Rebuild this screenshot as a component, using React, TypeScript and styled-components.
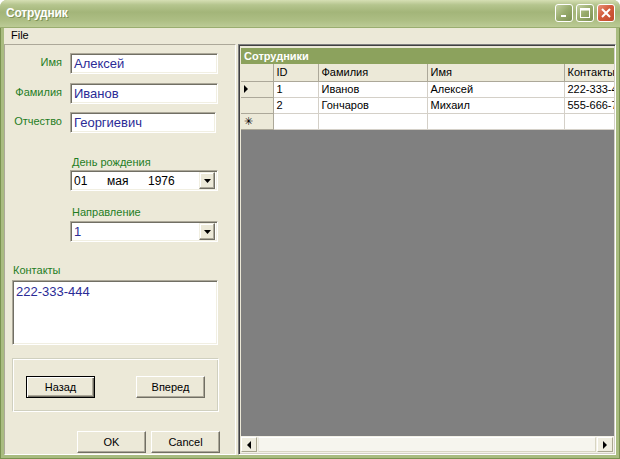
import React from 'react';
import styled, { createGlobalStyle } from 'styled-components';

const GlobalStyle = createGlobalStyle`
  html, body {
    margin: 0;
    padding: 0;
    background: #ffffff;
  }
  body {
    font-family: "Liberation Sans", Arial, sans-serif;
    font-size: 11px;
    overflow: hidden;
  }
  * { box-sizing: border-box; }
`;

const Window = styled.div`
  width: 620px;
  height: 459px;
  display: flex;
  flex-direction: column;
  border-radius: 7px 7px 0 0;
  overflow: hidden;
  background: #a9bc80;
`;

const TitleBar = styled.div`
  height: 28px;
  flex: none;
  display: flex;
  align-items: center;
  padding: 0 5px 2px 6px;
  background: linear-gradient(180deg, #d6dfb4 0%, #b5c58e 18%, #a3b579 45%, #adbe84 75%, #bccb96 100%);
  border-bottom: 1px solid #9aad70;
`;

const Title = styled.div`
  flex: 1;
  color: #ffffff;
  font-weight: bold;
  font-size: 12px;
  letter-spacing: -0.2px;
  text-shadow: 1px 1px 0 #7e9157;
`;

const Caps = styled.div`
  display: flex;
  gap: 3px;
  margin-top: 1px;
`;

const CapButton = styled.div<{ $close?: boolean }>`
  width: 18px;
  height: 18px;
  border: 1px solid #ffffff;
  border-radius: 3px;
  display: flex;
  align-items: center;
  justify-content: center;
  background: ${(p) =>
    p.$close
      ? 'linear-gradient(135deg, #e8927a 0%, #d35c3c 45%, #c24a2c 100%)'
      : 'linear-gradient(135deg, #c4d0a2 0%, #98ab6d 50%, #7d9154 100%)'};
`;

const Body = styled.div`
  flex: 1;
  display: flex;
  flex-direction: column;
  padding: 0 4px 4px;
  background: #a9bc80;
  box-shadow: inset 1px 0 #7a9150, inset -1px 0 #7a9150, inset 0 -1px #7a9150;
`;

const Client = styled.div`
  flex: 1;
  display: flex;
  flex-direction: column;
  background: #ece9d8;
`;

const MenuBar = styled.div`
  height: 16px;
  padding-left: 7px;
  line-height: 15px;
  font-size: 11px;
  color: #000;
`;

const Content = styled.div`
  flex: 1;
  display: flex;
  gap: 2px;
`;

const LeftPanel = styled.div`
  width: 232px;
  display: flex;
  flex-direction: column;
  border: 1px solid;
  border-color: #aca899 #ffffff #ffffff #aca899;
`;

const Row = styled.div<{ $mt: number }>`
  display: flex;
  gap: 8px;
  margin-top: ${(p) => p.$mt}px;
`;

const Label = styled.div<{ $ml?: number; $mt?: number }>`
  color: #1f7d1f;
  font-size: 11px;
  line-height: 13px;
  margin-left: ${(p) => p.$ml ?? 0}px;
  margin-top: ${(p) => p.$mt ?? 0}px;
`;

const SideLabel = styled(Label)`
  width: 57px;
  text-align: right;
  padding-top: 3px;
`;

const sunken = `
  border: 1px solid;
  border-color: #aca899 #ffffff #ffffff #aca899;
  box-shadow: inset 1px 1px #716f64, inset -1px -1px #f1efe2;
  background: #ffffff;
`;

const TextBox = styled.div<{ $w: number }>`
  ${sunken}
  width: ${(p) => p.$w}px;
  height: 21px;
  padding: 2px 0 0 3px;
  color: #2b2b96;
  font-size: 13px;
  line-height: 16px;
`;

const Picker = styled.div<{ $mt: number }>`
  ${sunken}
  margin: ${(p) => p.$mt}px 0 0 65px;
  width: 148px;
  height: 21px;
  display: flex;
  align-items: center;
  padding: 0 2px 0 3px;
  font-size: 12px;
`;

const PickerText = styled.div<{ $blue?: boolean }>`
  flex: 1;
  display: flex;
  color: ${(p) => (p.$blue ? '#2b2b96' : '#000')};
  font-size: ${(p) => (p.$blue ? 13 : 12)}px;
`;

const DatePart = styled.span<{ $w: number }>`
  width: ${(p) => p.$w}px;
`;

const DropButton = styled.div`
  width: 16px;
  height: 17px;
  display: flex;
  align-items: center;
  justify-content: center;
  background: #ece9d8;
  border: 1px solid;
  border-color: #f1efe2 #716f64 #716f64 #f1efe2;
  box-shadow: inset -1px -1px #aca899, inset 1px 1px #ffffff;
`;

const Memo = styled.div`
  ${sunken}
  margin: 3px 0 0 7px;
  width: 206px;
  height: 65px;
  padding: 3px 0 0 3px;
  color: #2b2b96;
  font-size: 13px;
  line-height: 15px;
`;

const GroupBox = styled.div`
  margin: 13px 0 0 7px;
  width: 207px;
  height: 54px;
  border: 1px solid;
  border-color: #d0d0bf #ffffff #ffffff #d0d0bf;
  box-shadow: inset 1px 1px #ffffff, inset -1px -1px #d0d0bf;
  display: flex;
  justify-content: space-between;
  padding: 17px 13px 0 13px;
`;

const Button = styled.div<{ $default?: boolean }>`
  width: 69px;
  height: 22px;
  display: flex;
  align-items: center;
  justify-content: center;
  font-size: 11px;
  color: #000;
  background: #ece9d8;
  border: 1px solid;
  border-color: ${(p) => (p.$default ? '#000' : '#ffffff #716f64 #716f64 #ffffff')};
  box-shadow: ${(p) =>
    p.$default
      ? 'inset 1px 1px #ffffff, inset -1px -1px #716f64, inset -2px -2px #aca899'
      : 'inset -1px -1px #aca899'};
`;

const Footer = styled.div`
  margin: 19px 0 0 72px;
  display: flex;
  gap: 5px;
`;

const RightPanel = styled.div`
  flex: 1;
  display: flex;
  flex-direction: column;
  border: 1px solid;
  border-color: #808080 #ffffff #ffffff #808080;
  box-shadow: inset 1px 1px #404040, inset -1px -1px #d4d0c8;
  padding: 3px 1px 1px 2px;
  min-width: 0;
`;

const Caption = styled.div`
  height: 16px;
  flex: none;
  background: #8ca25d;
  color: #ffffff;
  font-weight: bold;
  font-size: 11px;
  line-height: 16px;
  padding-left: 3px;
`;

const GridArea = styled.div`
  flex: 1;
  background: #808080;
  overflow: hidden;
`;

const Table = styled.table`
  border-collapse: collapse;
  table-layout: fixed;
  width: 403px;
  font-size: 11px;
`;

const HeadCell = styled.th<{ $w: number }>`
  width: ${(p) => p.$w}px;
  height: 17px;
  padding: 0 0 0 3px;
  text-align: left;
  font-weight: normal;
  background: #ece9d8;
  border-right: 1px solid #aca899;
  border-bottom: 1px solid #aca899;
  white-space: nowrap;
  overflow: hidden;
`;

const RowHead = styled.td`
  height: 16px;
  padding: 0 0 0 3px;
  background: #ece9d8;
  border-right: 1px solid #aca899;
  border-bottom: 1px solid #aca899;
`;

const Cell = styled.td`
  height: 16px;
  padding: 0 0 0 3px;
  background: #ffffff;
  border-right: 1px solid #d4d0c8;
  border-bottom: 1px solid #d4d0c8;
  white-space: nowrap;
  overflow: hidden;
`;

const ScrollBar = styled.div`
  height: 17px;
  flex: none;
  display: flex;
  background: #f3f1e7;
  padding: 1px 1px 1px 0;
`;

const ScrollButton = styled.div`
  width: 16px;
  height: 15px;
  display: flex;
  align-items: center;
  justify-content: center;
  background: #efeddf;
  border: 1px solid;
  border-color: #ffffff #a9a690 #a9a690 #ffffff;
`;

const Track = styled.div`
  flex: 1;
  margin: 0 1px;
  background: #f6f5ee;
  border: 1px solid;
  border-color: #ffffff #d8d5c2 #d8d5c2 #e9e7db;
`;

const Arrow = ({ dir }: { dir: 'left' | 'right' | 'down' }) => {
  const pts = dir === 'left' ? '4,0 4,8 0,4' : dir === 'right' ? '0,0 0,8 4,4' : '0,0 7,0 3.5,4';
  const w = dir === 'down' ? 7 : 4;
  const h = dir === 'down' ? 4 : 8;
  return (
    <svg width={w} height={h} viewBox={`0 0 ${w} ${h}`}>
      <polygon points={pts} fill="#000" />
    </svg>
  );
};

const rows = [
  { id: '1', last: 'Иванов', first: 'Алексей', contact: '222-333-444', current: true },
  { id: '2', last: 'Гончаров', first: 'Михаил', contact: '555-666-777', current: false },
];

export default function App() {
  return (
    <>
      <GlobalStyle />
      <Window>
        <TitleBar>
          <Title>Сотрудник</Title>
          <Caps>
            <CapButton>
              <svg width="10" height="10" viewBox="0 0 10 10">
                <rect x="2" y="7" width="5" height="2" fill="#fff" />
              </svg>
            </CapButton>
            <CapButton>
              <svg width="10" height="10" viewBox="0 0 10 10">
                <rect x="0.5" y="0.5" width="9" height="9" fill="none" stroke="#fff" />
                <rect x="0.5" y="0.5" width="9" height="2" fill="#fff" />
              </svg>
            </CapButton>
            <CapButton $close>
              <svg width="10" height="10" viewBox="0 0 10 10">
                <path d="M1 1 L9 9 M9 1 L1 9" stroke="#fff" strokeWidth="2" />
              </svg>
            </CapButton>
          </Caps>
        </TitleBar>
        <Body>
          <Client>
            <MenuBar>File</MenuBar>
            <Content>
              <LeftPanel>
                <Row $mt={8}>
                  <SideLabel>Имя</SideLabel>
                  <TextBox $w={148}>Алексей</TextBox>
                </Row>
                <Row $mt={9}>
                  <SideLabel>Фамилия</SideLabel>
                  <TextBox $w={148}>Иванов</TextBox>
                </Row>
                <Row $mt={8}>
                  <SideLabel>Отчество</SideLabel>
                  <TextBox $w={146}>Георгиевич</TextBox>
                </Row>
                <Label $ml={67} $mt={23}>День рождения</Label>
                <Picker $mt={1}>
                  <PickerText>
                    <DatePart $w={33}>01</DatePart>
                    <DatePart $w={41}>мая</DatePart>
                    <DatePart $w={30}>1976</DatePart>
                  </PickerText>
                  <DropButton>
                    <Arrow dir="down" />
                  </DropButton>
                </Picker>
                <Label $ml={67} $mt={15}>Направление</Label>
                <Picker $mt={2}>
                  <PickerText $blue>1</PickerText>
                  <DropButton>
                    <Arrow dir="down" />
                  </DropButton>
                </Picker>
                <Label $ml={8} $mt={22}>Контакты</Label>
                <Memo>222-333-444</Memo>
                <GroupBox>
                  <Button $default>Назад</Button>
                  <Button>Вперед</Button>
                </GroupBox>
                <Footer>
                  <Button>OK</Button>
                  <Button>Cancel</Button>
                </Footer>
              </LeftPanel>
              <RightPanel>
                <Caption>Сотрудники</Caption>
                <GridArea>
                  <Table>
                    <thead>
                      <tr>
                        <HeadCell $w={32} />
                        <HeadCell $w={45}>ID</HeadCell>
                        <HeadCell $w={109}>Фамилия</HeadCell>
                        <HeadCell $w={137}>Имя</HeadCell>
                        <HeadCell $w={80}>Контакты</HeadCell>
                      </tr>
                    </thead>
                    <tbody>
                      {rows.map((r) => (
                        <tr key={r.id}>
                          <RowHead>{r.current && <Arrow dir="right" />}</RowHead>
                          <Cell>{r.id}</Cell>
                          <Cell>{r.last}</Cell>
                          <Cell>{r.first}</Cell>
                          <Cell>{r.contact}</Cell>
                        </tr>
                      ))}
                      <tr>
                        <RowHead>✳</RowHead>
                        <Cell />
                        <Cell />
                        <Cell />
                        <Cell />
                      </tr>
                    </tbody>
                  </Table>
                </GridArea>
                <ScrollBar>
                  <ScrollButton>
                    <Arrow dir="left" />
                  </ScrollButton>
                  <Track />
                  <ScrollButton>
                    <Arrow dir="right" />
                  </ScrollButton>
                </ScrollBar>
              </RightPanel>
            </Content>
          </Client>
        </Body>
      </Window>
    </>
  );
}
